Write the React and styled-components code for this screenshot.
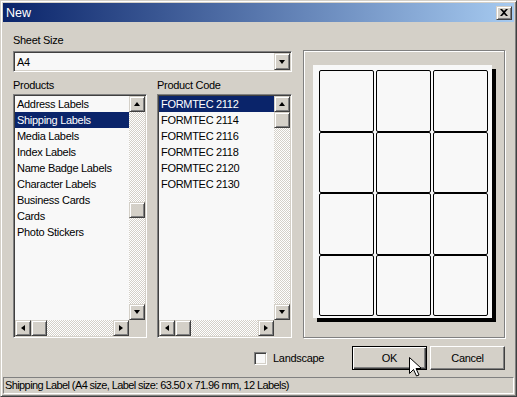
import React from 'react';
import styled, { createGlobalStyle, css } from 'styled-components';

const FONT = `"Liberation Sans", Arial, sans-serif`;
const FACE = '#d4d0c8';
const FIELD = '#f8f8f8';
const SELECT = '#0a246a';

const GlobalStyle = createGlobalStyle`
    body {
        margin: 0;
        background: ${FACE};
        font-family: ${FONT};
    }
`;

const sunken = css`
    border: 1px solid;
    border-color: #808080 #ffffff #ffffff #808080;
    box-shadow: inset 1px 1px 0 #404040, inset -1px -1px 0 ${FACE};
    padding: 1px;
    box-sizing: border-box;
`;

const raised = css`
    border: 1px solid;
    border-color: ${FACE} #404040 #404040 ${FACE};
    box-shadow: inset 1px 1px 0 #ffffff, inset -1px -1px 0 #808080;
    background: ${FACE};
    box-sizing: border-box;
`;

const dither = css`
    background: repeating-conic-gradient(#ffffff 0 25%, ${FACE} 0 50%) 0 0 / 2px 2px;
`;

const Window = styled.div`
    width: 517px;
    height: 397px;
    box-sizing: border-box;
    border: 1px solid;
    border-color: ${FACE} #404040 #404040 ${FACE};
    box-shadow: inset 1px 1px 0 #ffffff, inset -1px -1px 0 #808080;
    padding: 2px;
    background: ${FACE};
    display: flex;
    flex-direction: column;
    font-size: 11px;
    letter-spacing: -0.3px;
    color: #000;
`;

const TitleBar = styled.div`
    height: 19px;
    flex: none;
    display: flex;
    align-items: center;
    justify-content: space-between;
    padding: 0 2px 0 3px;
    background: linear-gradient(to right, #0a246a, #a6caf0);
`;

const Title = styled.span`
    color: #ffffff;
    font-size: 12.5px;
    letter-spacing: 0;
`;

const CloseButton = styled.div`
    ${raised};
    width: 16px;
    height: 14px;
    display: flex;
    align-items: center;
    justify-content: center;
`;

const Content = styled.div`
    flex: 1;
    display: flex;
    flex-direction: column;
    padding: 12px 9px 7px 10px;
`;

const Main = styled.div`
    display: grid;
    grid-template-columns: 279px 202px;
    column-gap: 11px;
    height: 304px;
`;

const Column = styled.div`
    display: flex;
    flex-direction: column;
`;

const Label = styled.div`
    height: 13px;
    line-height: 13px;
    margin-bottom: ${(p) => p.$gap || 2}px;
`;

const Combo = styled.div`
    ${sunken};
    height: 21px;
    background: ${FIELD};
    display: flex;
    align-items: center;
`;

const ComboValue = styled.div`
    flex: 1;
    padding-left: 2px;
`;

const DropButton = styled.div`
    ${raised};
    width: 16px;
    height: 17px;
    display: flex;
    align-items: center;
    justify-content: center;
`;

const Arrow = styled.span`
    width: 0;
    height: 0;
    border-style: solid;
    ${(p) => p.$dir === 'up' && css`border-width: 0 3.5px 4px; border-color: transparent transparent #000;`}
    ${(p) => p.$dir === 'down' && css`border-width: 4px 3.5px 0; border-color: #000 transparent transparent;`}
    ${(p) => p.$dir === 'left' && css`border-width: 3.5px 4px 3.5px 0; border-color: transparent #000 transparent transparent;`}
    ${(p) => p.$dir === 'right' && css`border-width: 3.5px 0 3.5px 4px; border-color: transparent transparent transparent #000;`}
`;

const ListsRow = styled.div`
    margin-top: 7px;
    display: grid;
    grid-template-columns: 134px 135px;
    column-gap: 10px;
`;

const ListBox = styled.div`
    ${sunken};
    height: 244px;
    background: ${FIELD};
    display: grid;
    grid-template-columns: 1fr 16px;
    grid-template-rows: 1fr 16px;
`;

const Items = styled.div`
    overflow: hidden;
`;

const Item = styled.div`
    height: 16px;
    line-height: 16px;
    padding-left: 2px;
    white-space: nowrap;
    ${(p) => p.$selected && css`
        background: ${SELECT};
        color: #ffffff;
    `}
`;

const VScroll = styled.div`
    display: flex;
    flex-direction: column;
    ${dither};
`;

const HScroll = styled.div`
    display: flex;
    ${dither};
`;

const ScrollButton = styled.div`
    ${raised};
    width: 16px;
    height: 16px;
    flex: none;
    display: flex;
    align-items: center;
    justify-content: center;
`;

const Track = styled.div`
    flex: 1;
    display: flex;
    flex-direction: ${(p) => (p.$vertical ? 'column' : 'row')};
`;

const Thumb = styled.div`
    ${raised};
    width: 16px;
    height: 16px;
    flex: none;
    margin-top: ${(p) => p.$offset || 0}px;
`;

const Corner = styled.div`
    background: ${FACE};
`;

const PreviewGroup = styled.div`
    margin-top: 16px;
    flex: 1;
    border: 1px solid #808080;
    box-shadow: inset 1px 1px 0 #ffffff, 1px 1px 0 #ffffff;
    padding: 14px 0 0 9px;
`;

const Page = styled.div`
    width: 179px;
    height: 253px;
    box-sizing: border-box;
    padding: 5px 6px 2px;
    background: ${FIELD};
    box-shadow: 4px 4px 0 #000000;
    display: grid;
    grid-template-columns: repeat(3, 55px);
    grid-template-rows: repeat(4, 1fr);
    column-gap: 2px;
`;

const Cell = styled.div`
    border: 1px solid #000000;
    border-radius: 2px;
`;

const BottomRow = styled.div`
    margin-top: 8px;
    height: 24px;
    display: flex;
    align-items: center;
`;

const CheckLabel = styled.label`
    margin-left: 241px;
    display: flex;
    align-items: center;
    gap: 6px;
`;

const CheckBox = styled.span`
    ${sunken};
    width: 13px;
    height: 13px;
    background: ${FIELD};
`;

const Button = styled.div`
    position: relative;
    width: 75px;
    height: 24px;
    margin-left: ${(p) => (p.$default ? 'auto' : '3px')};
    box-sizing: border-box;
    display: flex;
    align-items: center;
    justify-content: center;
    background: ${FACE};
    ${(p) => p.$default
        ? css`
            border: 1px solid #000000;
            box-shadow: inset 1px 1px 0 #ffffff, inset -1px -1px 0 #404040, inset -2px -2px 0 #808080;
        `
        : css`
            border: 1px solid;
            border-color: #ffffff #404040 #404040 #ffffff;
            box-shadow: inset -1px -1px 0 #808080;
        `}
`;

const Cursor = styled.svg`
    position: absolute;
    left: 56px;
    top: 10px;
`;

const StatusBar = styled.div`
    height: 17px;
    flex: none;
    box-sizing: border-box;
    border: 1px solid;
    border-color: #808080 #ffffff #ffffff #808080;
    padding-left: 1px;
    line-height: 15px;
    letter-spacing: -0.6px;
    white-space: nowrap;
    overflow: hidden;
`;

const products = [
    'Address Labels', 'Shipping Labels', 'Media Labels', 'Index Labels',
    'Name Badge Labels', 'Character Labels', 'Business Cards', 'Cards', 'Photo Stickers',
];

const codes = [
    'FORMTEC 2112', 'FORMTEC 2114', 'FORMTEC 2116',
    'FORMTEC 2118', 'FORMTEC 2120', 'FORMTEC 2130',
];

const List = ({ items, selected, thumb }) => (
    <ListBox>
        <Items>
            {items.map((it) => (
                <Item key={it} $selected={it === selected}>{it}</Item>
            ))}
        </Items>
        <VScroll>
            <ScrollButton><Arrow $dir="up" /></ScrollButton>
            <Track $vertical><Thumb $offset={thumb} /></Track>
            <ScrollButton><Arrow $dir="down" /></ScrollButton>
        </VScroll>
        <HScroll>
            <ScrollButton><Arrow $dir="left" /></ScrollButton>
            <Track><Thumb /></Track>
            <ScrollButton><Arrow $dir="right" /></ScrollButton>
        </HScroll>
        <Corner />
    </ListBox>
);

export default function App() {
    return (
        <>
            <GlobalStyle />
            <Window>
                <TitleBar>
                    <Title>New</Title>
                    <CloseButton>
                        <svg width="8" height="7" viewBox="0 0 8 7">
                            <path d="M0 0h2l2 2 2-2h2L5 3.5 8 7H6L4 5 2 7H0l3-3.5z" fill="#000" />
                        </svg>
                    </CloseButton>
                </TitleBar>
                <Content>
                    <Main>
                        <Column>
                            <Label $gap={4}>Sheet Size</Label>
                            <Combo>
                                <ComboValue>A4</ComboValue>
                                <DropButton><Arrow $dir="down" /></DropButton>
                            </Combo>
                            <ListsRow>
                                <Column>
                                    <Label>Products</Label>
                                    <List items={products} selected="Shipping Labels" thumb={90} />
                                </Column>
                                <Column>
                                    <Label>Product Code</Label>
                                    <List items={codes} selected="FORMTEC 2112" thumb={0} />
                                </Column>
                            </ListsRow>
                        </Column>
                        <Column>
                            <PreviewGroup>
                                <Page>
                                    {Array.from({ length: 12 }, (_, i) => <Cell key={i} />)}
                                </Page>
                            </PreviewGroup>
                        </Column>
                    </Main>
                    <BottomRow>
                        <CheckLabel>
                            <CheckBox />
                            Landscape
                        </CheckLabel>
                        <Button $default>
                            OK
                            <Cursor width="12" height="20" viewBox="0 0 12 20">
                                <path d="M0.5 0.5v16l4-4 3 6.5 2.5-1-3-6.5h5.5z" fill="#fff" stroke="#000" />
                            </Cursor>
                        </Button>
                        <Button>Cancel</Button>
                    </BottomRow>
                </Content>
                <StatusBar>Shipping Label (A4 size, Label size: 63.50 x 71.96 mm, 12 Labels)</StatusBar>
            </Window>
        </>
    );
}
